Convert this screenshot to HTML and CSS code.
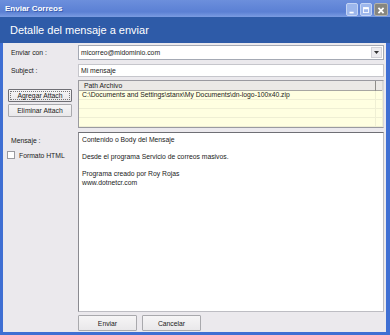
FILE: index.html
```html
<!DOCTYPE html>
<html>
	<head>
		<meta charset="utf-8">
		<title>Enviar Correos</title>
		<link rel="stylesheet" href="styles.css">
	</head>
	<body>
		<div class="window">
			<div class="titlebar">
				<span class="title">Enviar Correos</span>
				<div class="caption-btns">
					<span class="cap-btn"><svg width="12" height="13" viewBox="0 0 12 13"><rect x="3" y="8" width="5" height="2" fill="#fff"/></svg></span>
					<span class="cap-btn"><svg width="12" height="13" viewBox="0 0 12 13"><rect x="3" y="3" width="6" height="6" fill="none" stroke="#fff" stroke-width="1"/><rect x="3" y="3" width="6" height="2" fill="#fff"/></svg></span>
					<span class="cap-btn close"><svg width="14" height="13" viewBox="0 0 14 13"><path d="M4 3.5 L10 9.5 M10 3.5 L4 9.5" stroke="#fff" stroke-width="2"/></svg></span>
				</div>
			</div>
			<div class="banner">Detalle del mensaje a enviar</div>
			<div class="client">
				<div class="row row-from">
					<div class="side"><span class="lbl">Enviar con :</span></div>
					<div class="combo">
						<span class="combo-text">micorreo@midominio.com</span>
						<span class="drop"><svg width="5" height="3" viewBox="0 0 5 3"><path d="M0 0 H5 L2.5 3 Z" fill="#333"/></svg></span>
					</div>
				</div>
				<div class="row row-subject">
					<div class="side"><span class="lbl">Subject :</span></div>
					<div class="textbox">Mi mensaje</div>
				</div>
				<div class="row row-attach">
					<div class="side side-btns">
						<button class="btn btn-side default"><span>Agregar Attach</span></button>
						<button class="btn btn-side">Eliminar Attach</button>
					</div>
					<div class="datagrid">
						<div class="grid-head">
							<span class="head-cell">Path Archivo</span>
							<span class="head-cell"></span>
						</div>
						<div class="grid-row"><span class="cell">C:\Documents and Settings\stanx\My Documents\dn-logo-100x40.zip</span><span class="cell"></span></div>
						<div class="grid-row"><span class="cell"></span><span class="cell"></span></div>
						<div class="grid-row"><span class="cell"></span><span class="cell"></span></div>
						<div class="grid-row"><span class="cell"></span><span class="cell"></span></div>
					</div>
				</div>
				<div class="row row-body">
					<div class="side side-msg">
						<span class="lbl">Mensaje :</span>
						<label class="check"><span class="box"></span>Formato HTML</label>
					</div>
					<div class="memo">Contenido o Body del Mensaje

Desde el programa Servicio de correos masivos.

Programa creado por Roy Rojas
www.dotnetcr.com</div>
				</div>
				<div class="row row-actions">
					<div class="side"></div>
					<div class="actions">
						<button class="btn btn-act">Enviar</button>
						<button class="btn btn-act">Cancelar</button>
					</div>
				</div>
			</div>
		</div>
	</body>
</html>
```

FILE: styles.css
```css
body{
	margin: 0;
	font-family: "Liberation Sans", Arial, sans-serif;
	font-size: 6.8px;
	color: #1a1a1a;
}
.window{
	width: 390px;
	height: 335px;
	display: flex;
	flex-direction: column;
	background: #3f6fd3;
}
.titlebar{
	height: 17px;
	display: flex;
	align-items: center;
	justify-content: space-between;
	background: linear-gradient(#6c8fdc, #5b80d4 70%, #7b9ce2);
	padding: 0 2px 0 5px;
}
.title{
	color: #fff;
	font-weight: bold;
	font-size: 8px;
	text-shadow: 1px 1px 0 #3a5cae;
}
.caption-btns{
	display: flex;
	gap: 2px;
	align-self: flex-start;
	margin-top: 3px;
}
.cap-btn{
	width: 12px;
	height: 13px;
	display: flex;
	background: #9db7ec;
	border: 1px solid #c4d4f4;
	box-sizing: border-box;
	border-radius: 2px;
}
.cap-btn.close{
	width: 14px;
	background: #86867f;
	border-color: #b3b3ad;
}
.banner{
	height: 26px;
	box-sizing: border-box;
	background: #2e5ba8;
	color: #fff;
	font-size: 11px;
	padding: 7px 0 0 10px;
}
.client{
	flex: 1;
	margin: 0 4px 3px 3px;
	background: #ebe9ed;
	padding: 2px 2px 1px 0;
	display: flex;
	flex-direction: column;
}
.row{
	display: flex;
}
.side{
	width: 75px;
	flex: none;
}
.lbl{
	padding-left: 8px;
}
.row-from{
	height: 15px;
}
.row-from .side, .row-subject .side{
	display: flex;
	align-items: center;
}
.combo{
	flex: 1;
	background: #fff;
	border: 1px solid #a4a9b4;
	display: flex;
	align-items: center;
	justify-content: space-between;
	padding-left: 2px;
}
.drop{
	width: 11px;
	height: 11px;
	margin-right: 1px;
	background: #ecebef;
	border: 1px solid #d2d2d8;
	box-sizing: border-box;
	display: flex;
	align-items: center;
	justify-content: center;
}
.row-subject{
	height: 13px;
	margin-top: 4px;
}
.textbox{
	flex: 1;
	background: #fff;
	border: 1px solid #c6c6cc;
	padding-left: 2px;
	display: flex;
	align-items: center;
}
.row-attach{
	height: 48px;
	margin-top: 3px;
}
.side-btns{
	display: flex;
	flex-direction: column;
	gap: 2px;
	padding: 9px 0 0 5px;
	box-sizing: border-box;
}
.btn{
	font-family: inherit;
	font-size: 6.8px;
	color: #1a1a1a;
	background: linear-gradient(#f6f5f6, #e9e8ea);
	border: 1px solid #a9a9ad;
	border-radius: 1px;
	padding: 0;
	box-sizing: border-box;
}
.btn-side{
	width: 64px;
	height: 13px;
}
.btn-side.default{
	border-color: #6f6f75;
	padding: 1px;
}
.btn-side.default span{
	display: block;
	height: 100%;
	border: 1px dotted #777;
	box-sizing: border-box;
	line-height: 8px;
}
.datagrid{
	flex: 1;
	border: 1px solid #9a9aa0;
	border-right-color: #d6d6da;
	background: #ffffe1;
}
.grid-head, .grid-row{
	display: grid;
	grid-template-columns: 1fr 7px;
}
.grid-head{
	height: 10px;
	background: #ebe9e6;
	border-bottom: 1px solid #a7a6a2;
	box-sizing: border-box;
}
.head-cell{
	padding-left: 5px;
	line-height: 10px;
	border-right: 1px solid #8f8e8a;
}
.head-cell:last-child{
	border-right-color: #d8d7d3;
}
.grid-row{
	height: 9px;
	border-bottom: 1px solid #efefd4;
	box-sizing: border-box;
}
.cell{
	padding-left: 3px;
	line-height: 8px;
	border-right: 1px solid #efefd4;
	white-space: nowrap;
	overflow: hidden;
}
.row-body{
	height: 180px;
	margin-top: 4px;
}
.side-msg{
	display: flex;
	flex-direction: column;
	padding-top: 5px;
}
.check{
	display: flex;
	align-items: center;
	gap: 4px;
	padding-left: 4px;
	margin-top: 7px;
}
.box{
	width: 8px;
	height: 8px;
	background: #fff;
	border: 1px solid #9a9aa0;
	box-sizing: border-box;
}
.memo{
	flex: 1;
	background: #fff;
	border: 1px solid #bdbdc3;
	border-top-color: #6f6f75;
	border-left-color: #8a8a90;
	padding: 3px 0 0 3px;
	white-space: pre-wrap;
	line-height: 8.5px;
}
.row-actions{
	height: 16px;
	margin-top: 3px;
}
.actions{
	display: flex;
	gap: 5px;
}
.btn-act{
	width: 59px;
	height: 16px;
}
```
